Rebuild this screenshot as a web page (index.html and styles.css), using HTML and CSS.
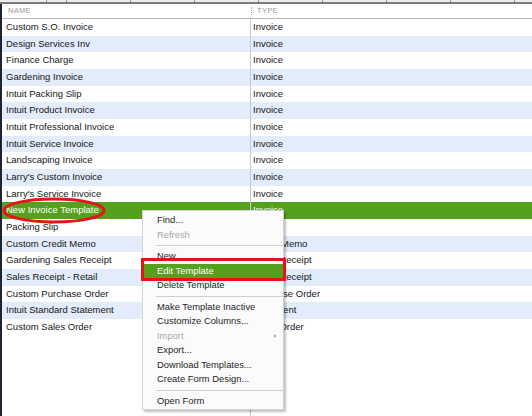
FILE: index.html
```html
<!DOCTYPE html>
<html lang="en">

<head>
    <meta charset="UTF-8">
    <meta name="viewport" content="width=device-width, initial-scale=1.0">
    <title>Templates</title>
    <link rel="stylesheet" href="styles.css">
</head>

<body>
    <div class="topbar"></div>
    <div class="list">
        <div class="head">
            <div class="name">NAME</div>
            <div class="type"><span class="grip"></span>TYPE</div>
        </div>
        <div class="row"><div class="name">Custom S.O. Invoice</div><div class="type">Invoice</div></div>
        <div class="row"><div class="name">Design Services Inv</div><div class="type">Invoice</div></div>
        <div class="row"><div class="name">Finance Charge</div><div class="type">Invoice</div></div>
        <div class="row"><div class="name">Gardening Invoice</div><div class="type">Invoice</div></div>
        <div class="row"><div class="name">Intuit Packing Slip</div><div class="type">Invoice</div></div>
        <div class="row"><div class="name">Intuit Product Invoice</div><div class="type">Invoice</div></div>
        <div class="row"><div class="name">Intuit Professional Invoice</div><div class="type">Invoice</div></div>
        <div class="row"><div class="name">Intuit Service Invoice</div><div class="type">Invoice</div></div>
        <div class="row"><div class="name">Landscaping Invoice</div><div class="type">Invoice</div></div>
        <div class="row"><div class="name">Larry's Custom Invoice</div><div class="type">Invoice</div></div>
        <div class="row"><div class="name">Larry's Service Invoice</div><div class="type">Invoice</div></div>
        <div class="row selected"><div class="name">New Invoice Template</div><div class="type">Invoice</div></div>
        <div class="row"><div class="name">Packing Slip</div><div class="type">Invoice</div></div>
        <div class="row"><div class="name">Custom Credit Memo</div><div class="type">Credit Memo</div></div>
        <div class="row"><div class="name">Gardening Sales Receipt</div><div class="type">Sales Receipt</div></div>
        <div class="row"><div class="name">Sales Receipt - Retail</div><div class="type">Sales Receipt</div></div>
        <div class="row"><div class="name">Custom Purchase Order</div><div class="type">Purchase Order</div></div>
        <div class="row"><div class="name">Intuit Standard Statement</div><div class="type">Statement</div></div>
        <div class="row"><div class="name">Custom Sales Order</div><div class="type">Sales Order</div></div>
        <div class="filler"><div class="name"></div></div>
    </div>

    <!-- right-click menu on the selected template -->
    <ul class="menu">
        <li>Find...</li>
        <li class="off">Refresh</li>
        <li class="sep"></li>
        <li>New</li>
        <li class="hot">Edit Template</li>
        <li>Delete Template</li>
        <li class="sep"></li>
        <li>Make Template Inactive</li>
        <li>Customize Columns...</li>
        <li class="off sub">Import</li>
        <li>Export...</li>
        <li>Download Templates...</li>
        <li>Create Form Design...</li>
        <li class="sep"></li>
        <li>Open Form</li>
    </ul>

    <div class="box"></div>
    <svg class="ring" width="112" height="32" viewBox="0 0 112 32">
        <ellipse cx="54" cy="14.5" rx="50" ry="11.5" fill="none" stroke="#e8121a" stroke-width="3" />
    </svg>
</body>

</html>
```

FILE: styles.css
```css
* {
    margin: 0;
    padding: 0
}

html,
body {
    height: 100%
}

body {
    display: flex;
    flex-direction: column;
    overflow: hidden;
    background: #fff;
    font-family: "Liberation Sans", Arial, sans-serif;
    font-size: 9.5px;
    color: #161616
}

.topbar {
    height: 2px;
    flex: none;
    background: #ececec repeating-linear-gradient(to right, #a0a0a0 0 1px, transparent 1px 64px) 66px 0;
    border-bottom: 2px solid #7b7b7b
}

.list {
    flex: 1;
    display: flex;
    flex-direction: column;
    border-left: 2px solid #1d2434
}

.head,
.row,
.filler {
    display: flex
}

.name {
    width: 249px;
    flex: none;
    padding-left: 4px;
    box-sizing: border-box;
    border-right: 1px solid #c9c9c9
}

.type {
    flex: 1;
    padding-left: 2px;
    white-space: nowrap
}

.head {
    height: 14px;
    line-height: 14px;
    font-size: 7.5px;
    letter-spacing: 0.3px;
    color: #9a9a9a;
    border-bottom: 1px solid #b9b9b9
}

.head .name {
    padding-left: 6px;
    border-right: none
}

.head .type {
    position: relative;
    padding-left: 6px
}

.grip {
    position: absolute;
    left: 0;
    top: 3px;
    height: 8px;
    border-left: 1px dotted #a8a8a8
}

.row {
    height: 16.67px;
    line-height: 16.67px
}

.row:nth-of-type(odd) {
    background: #e2ecfb
}

.row.selected {
    background: #55a01c;
    color: #fff
}

.filler {
    flex: 1
}

.menu {
    position: absolute;
    left: 142px;
    top: 210px;
    width: 142px;
    padding: 2px 0 1px;
    list-style: none;
    background: #fbfbfb;
    border: 1px solid #d4d4d4;
    box-sizing: border-box;
    box-shadow: 2px 2px 2px rgba(0, 0, 0, 0.25);
    font-size: 9.4px;
    color: #1e1e1e
}

.menu li {
    height: 14.5px;
    line-height: 14.5px;
    padding-left: 14px
}

.menu li.off {
    color: #a9a9a9
}

.menu li.sub {
    position: relative
}

.menu li.sub::after {
    content: "";
    position: absolute;
    right: 6px;
    top: 5px;
    border-left: 3px solid #b0b0b0;
    border-top: 2.5px solid transparent;
    border-bottom: 2.5px solid transparent
}

.menu li.hot {
    background: #55a01c;
    color: #fff
}

.menu li.sep {
    height: 7px;
    padding: 0;
    margin-left: 13px;
    background: linear-gradient(#cfcfcf, #cfcfcf) 0 3px / 100% 1px no-repeat
}

.box {
    position: absolute;
    left: 141px;
    top: 258px;
    width: 145px;
    height: 23px;
    box-sizing: border-box;
    border: 3px solid #e8121a
}

.ring {
    position: absolute;
    left: 0;
    top: 196px
}
```
